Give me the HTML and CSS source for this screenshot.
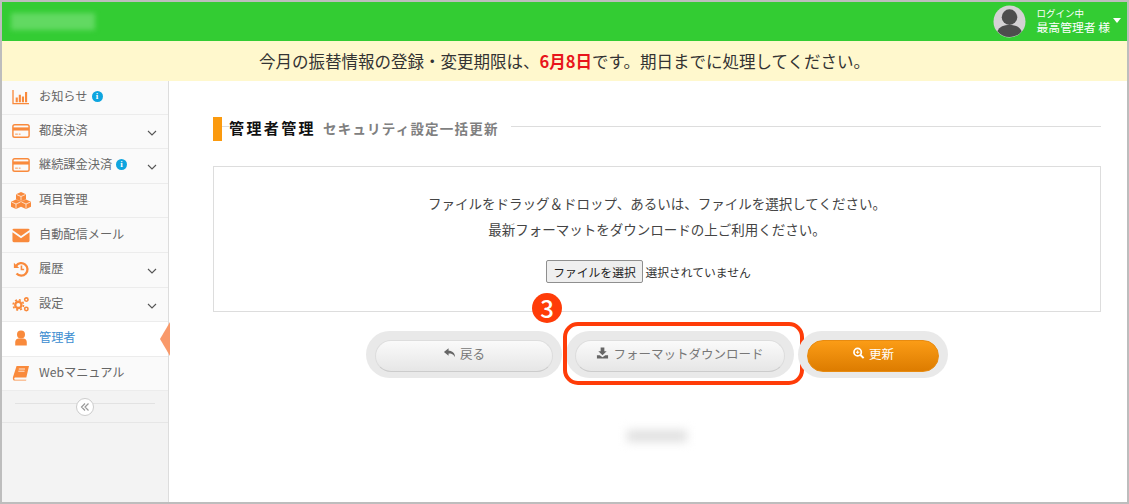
FILE: index.html
```html
<!DOCTYPE html>
<html lang="ja">
<head>
    <meta charset="UTF-8">
    <title>管理者管理</title>
    <link rel="stylesheet" href="styles.css">
</head>
<body>
<div class="frame">
    <header class="topbar">
        <div class="logo-blur"></div>
        <div class="user">
            <svg class="avatar" viewBox="0 0 34 34">
                <circle cx="17" cy="17" r="16.5" fill="#d4d2d4"/>
                <circle cx="17" cy="12.5" r="8" fill="#4d4d4d"/>
                <path d="M4.5 27c2-5 7-6.500 12.500-6.500S27.500 22 29.500 27c-3 4-7.500 6-12.500 6S7.500 31 4.500 27z" fill="#4d4d4d"/>
            </svg>
            <div class="user-text">
                <div class="user-status">ログイン中</div>
                <div class="user-name">最高管理者 様</div>
            </div>
            <span class="user-caret"></span>
        </div>
    </header>
    <div class="notice">今月の振替情報の登録・変更期限は、<b>6月8日</b>です。期日までに処理してください。</div>
    <div class="layout">
        <nav class="sidebar">
            <a class="nav-item">
                <svg class="nav-icon" viewBox="0 0 20 18"><path d="M1 1v15.500h18" fill="none" stroke="#f98a3c" stroke-width="1.500"/><path d="M4 9.500h2.400V15H4zM7.500 6.500h2.400V15H7.500zM11 8.500h2.400V15H11zM14.500 3.500h2.400V15h-2.400z" fill="#f98a3c"/></svg>
                <span>お知らせ</span><i class="info">i</i>
            </a>
            <a class="nav-item">
                <svg class="nav-icon" viewBox="0 0 20 16"><rect x="1" y="1" width="18" height="14" rx="2" fill="none" stroke="#f98a3c" stroke-width="1.600"/><path d="M1 4h18v3.500H1z" fill="#f98a3c"/><path d="M3.500 11.500h3M7.500 11.500h2" stroke="#f98a3c" stroke-width="1"/></svg>
                <span>都度決済</span><svg class="chev" viewBox="0 0 10 6"><path d="M1 1l4 4 4-4" fill="none" stroke="#555" stroke-width="1.100"/></svg>
            </a>
            <a class="nav-item">
                <svg class="nav-icon" viewBox="0 0 20 16"><rect x="1" y="1" width="18" height="14" rx="2" fill="none" stroke="#f98a3c" stroke-width="1.600"/><path d="M1 4h18v3.500H1z" fill="#f98a3c"/><path d="M3.500 11.500h3M7.500 11.500h2" stroke="#f98a3c" stroke-width="1"/></svg>
                <span>継続課金決済</span><i class="info">i</i><svg class="chev" viewBox="0 0 10 6"><path d="M1 1l4 4 4-4" fill="none" stroke="#555" stroke-width="1.100"/></svg>
            </a>
            <a class="nav-item">
                <svg class="nav-icon nav-icon-cubes" viewBox="0 0 20 17"><path d="M10 0l5 2.200v5L10 9.500 5 7.200v-5zM5 7.500l5 2.200v5L5 17 0 14.700v-5zM15 7.500l5 2.200v5L15 17l-5-2.300v-5z" fill="#f98a3c"/><path d="M5.500 2.500L10 4.500l4.500-2M10 4.500v4M.5 10L5 12l4.500-2M5 12v4.500M10.500 10l4.500 2 4.500-2M15 12v4.500" fill="none" stroke="#fff" stroke-width=".7"/></svg>
                <span>項目管理</span>
            </a>
            <a class="nav-item">
                <svg class="nav-icon" viewBox="0 0 20 16"><path d="M2 1h16a1.500 1.500 0 0 1 1.500 1.500L10 9 .5 2.500A1.500 1.500 0 0 1 2 1z" fill="#f98a3c"/><path d="M.5 5L10 11.500 19.500 5v9.500A1.500 1.500 0 0 1 18 16H2a1.500 1.500 0 0 1-1.500-1.500z" fill="#f98a3c"/></svg>
                <span>自動配信メール</span>
            </a>
            <a class="nav-item">
                <svg class="nav-icon" viewBox="0 0 20 18"><path d="M4.500 5.500A7 7 0 1 1 5 14" fill="none" stroke="#f98a3c" stroke-width="2.600"/><path d="M2 2v6h6z" fill="#f98a3c"/><path d="M10.500 5v4.500h3" fill="none" stroke="#f98a3c" stroke-width="1.800"/></svg>
                <span>履歴</span><svg class="chev" viewBox="0 0 10 6"><path d="M1 1l4 4 4-4" fill="none" stroke="#555" stroke-width="1.100"/></svg>
            </a>
            <a class="nav-item">
                <svg class="nav-icon" viewBox="0 0 20 18"><circle cx="7" cy="10" r="3.500" fill="none" stroke="#f98a3c" stroke-width="2.600"/><circle cx="7" cy="10" r="5.800" fill="none" stroke="#f98a3c" stroke-width="1.800" stroke-dasharray="2.300 2.250"/><circle cx="16" cy="4" r="1.900" fill="none" stroke="#f98a3c" stroke-width="1.800"/><circle cx="16" cy="14.500" r="1.900" fill="none" stroke="#f98a3c" stroke-width="1.800"/></svg>
                <span>設定</span><svg class="chev" viewBox="0 0 10 6"><path d="M1 1l4 4 4-4" fill="none" stroke="#555" stroke-width="1.100"/></svg>
            </a>
            <a class="nav-item active">
                <svg class="nav-icon" viewBox="0 0 20 18"><circle cx="10" cy="5" r="4.500" fill="#f98a3c"/><path d="M3.500 17.500v-4c0-3 2.500-4 3.500-4h6c1 0 3.500 1 3.500 4v4z" fill="#f98a3c"/></svg>
                <span>管理者</span>
            </a>
            <a class="nav-item">
                <svg class="nav-icon" viewBox="0 0 20 18"><path d="M5 1h14l-3 13H3.500C2 14 2 16.500 3.500 16.500H16l-.3 1H3C.5 17.500.5 14 1.500 12z" fill="#f98a3c"/><path d="M7.500 4.500h7M7 7h7" stroke="#fff" stroke-width=".9"/></svg>
                <span>Webマニュアル</span>
            </a>
            <div class="collapse-row">
                <span class="collapse-btn"><svg viewBox="0 0 10 10"><path d="M5 1.500L1.500 5 5 8.500M8.500 1.500L5 5l3.500 3.500" fill="none" stroke="#999" stroke-width="1.200"/></svg></span>
            </div>
        </nav>
        <main class="content">
            <div class="page-title">
                <h1>管理者管理</h1>
                <span class="page-sub">セキュリティ設定一括更新</span>
            </div>
            <section class="upload-box">
                <p>ファイルをドラッグ＆ドロップ、あるいは、ファイルを選択してください。</p>
                <p>最新フォーマットをダウンロードの上ご利用ください。</p>
                <div class="file-row">
                    <button class="file-btn">ファイルを選択</button>
                    <span>選択されていません</span>
                </div>
            </section>
            <div class="actions">
                <span class="badge">3</span>
                <div class="pill pill-back">
                    <a class="btn">
                        <svg class="btn-icon" viewBox="0 0 14 12"><path d="M6 1L1 5l5 4V6.500c3 0 5 .5 7 4C13 6 10 3.500 6 3.500z" fill="#666"/></svg>戻る
                    </a>
                </div>
                <div class="pill pill-format">
                    <a class="btn">
                        <svg class="btn-icon" viewBox="0 0 14 12"><path d="M5 0h4v4h2.500L7 8.500 2.500 4H5zM1 8.500h3L7 10.500l3-2h3V12H1z" fill="#666"/></svg>フォーマットダウンロード
                    </a>
                    <div class="highlight"></div>
                </div>
                <div class="pill pill-update">
                    <a class="btn btn-primary">
                        <svg class="btn-icon" viewBox="0 0 14 14"><circle cx="6" cy="6" r="4.300" fill="none" stroke="#fff" stroke-width="2"/><path d="M9 9l4 4" stroke="#fff" stroke-width="2.200"/><path d="M4 6h4M6 4v4" stroke="#fff" stroke-width="1.200"/></svg>更新
                    </a>
                </div>
            </div>
            <div class="footer-blur"></div>
        </main>
    </div>
</div>
</body>
</html>
```

FILE: styles.css
```css
html, body {
    margin: 0;
    padding: 0;
}
body {
    font-family: "Noto Sans CJK JP", "Noto Sans", sans-serif;
    color: #444;
}
.frame {
    width: 1129px;
    height: 504px;
    box-sizing: border-box;
    border: 2px solid #bdbdbd;
    overflow: hidden;
    background: #fff;
}
.topbar {
    height: 39px;
    background: #33cc33;
    display: flex;
    justify-content: space-between;
    align-items: center;
}
.logo-blur {
    width: 84px;
    height: 17px;
    margin-left: 9px;
    background: #62d962;
    filter: blur(2.500px);
}
.user {
    display: flex;
    align-items: center;
    color: #fff;
    margin-right: 6px;
}
.avatar {
    width: 33px;
    height: 33px;
    margin-bottom: 1px;
}
.user-text {
    margin: 0 0 2px 11px;
}
.user-status {
    font-size: 9.500px;
    line-height: 12px;
}
.user-name {
    font-size: 11.800px;
    line-height: 15px;
}
.user-caret {
    margin: 0 0 3px 3px;
    border-left: 4px solid transparent;
    border-right: 4px solid transparent;
    border-top: 5px solid #fff;
}
.notice {
    height: 40px;
    line-height: 40px;
    background: #fff8cd;
    text-align: center;
    font-size: 16.500px;
    color: #333;
}
.notice b {
    color: #e8151b;
}
.layout {
    display: flex;
    height: 421px;
}
.sidebar {
    width: 166px;
    flex-shrink: 0;
    background: #f3f3f3;
    border-right: 1px solid #ddd;
}
.nav-item {
    position: relative;
    height: 33.600px;
    display: flex;
    align-items: center;
    padding-left: 10px;
    background: #fafafa;
    border-bottom: 1px solid #ececec;
    font-size: 12.200px;
    color: #666;
}
.nav-item:first-child {
    height: 32.600px;
}
.nav-item span {
    margin-bottom: 3px;
}
.nav-icon {
    width: 18px;
    height: 16px;
    margin: 0 9px 1px 0;
    flex-shrink: 0;
}
.nav-icon-cubes {
    width: 20px;
    height: 17px;
    margin: 0 8px 0 -1px;
}
.info {
    width: 11px;
    height: 11px;
    margin: 0 0 2px 4px;
    border-radius: 50%;
    background: #0ea5df;
    color: #fff;
    font: bold 9px/11px "Liberation Serif", serif;
    text-align: center;
}
.chev {
    position: absolute;
    right: 11px;
    top: 15px;
    width: 10px;
    height: 6px;
}
.nav-item.active {
    background: #fff;
    color: #3c8dd0;
}
.nav-item.active::after {
    content: "";
    position: absolute;
    right: -2px;
    top: 0;
    bottom: 0;
    border-top: 17px solid transparent;
    border-bottom: 17px solid transparent;
    border-right: 10px solid #f9996a;
}
.collapse-row {
    height: 31px;
    padding: 0 13px;
    display: flex;
    justify-content: center;
    align-items: center;
    border-bottom: 1px solid #e6e6e6;
    background: linear-gradient(#e2e2e2, #e2e2e2) center 12px / 140px 1px no-repeat;
}
.collapse-btn {
    display: flex;
    justify-content: center;
    align-items: center;
    width: 16px;
    height: 16px;
    margin-left: -1px;
    border: 1px solid #ccc;
    border-radius: 50%;
    background: #fff;
}
.collapse-btn svg {
    width: 10px;
    height: 10px;
}
.content {
    flex: 1;
    padding: 36px 26px 0 44px;
    position: relative;
}
.page-title {
    display: flex;
    align-items: center;
    height: 24px;
    border-left: 9px solid #fb9a0e;
    padding-left: 7px;
    background: linear-gradient(#ddd, #ddd) 0 9px / 100% 1px no-repeat;
}
.page-title h1 {
    margin: 0 0 3px;
    padding: 0;
    font-size: 15px;
    letter-spacing: 2.400px;
    color: #111;
    background: #fff;
}
.page-sub {
    margin-bottom: 3px;
    padding: 0 12px 0 7px;
    font-size: 13.500px;
    font-weight: 700;
    letter-spacing: 1.200px;
    color: #808080;
    background: #fff;
}
.upload-box {
    margin-top: 25px;
    height: 146px;
    box-sizing: border-box;
    border: 1px solid #ddd;
    padding-top: 26px;
    text-align: center;
    font-size: 13.500px;
    color: #444;
}
.upload-box p {
    margin: 0 0 6px;
    line-height: 20px;
}
.file-row {
    margin: 21px 17px 0 0;
    font-size: 11.800px;
    color: #333;
}
.file-btn {
    height: 23px;
    padding: 0 6px;
    border: 1px solid #8f8f8f;
    border-radius: 2px;
    background: #efefef;
    color: #222;
    font: 11.800px "Noto Sans CJK JP", sans-serif;
}
.actions {
    position: relative;
    margin-top: 19px;
    display: flex;
    justify-content: center;
    gap: 4px;
}
.pill {
    position: relative;
    height: 47px;
    box-sizing: border-box;
    padding: 8.500px 9px;
    border-radius: 24px;
    background: #e9e9e9;
}
.pill-back { width: 196px; }
.pill-format { width: 228px; }
.pill-update { width: 150px; }
.btn {
    display: flex;
    justify-content: center;
    align-items: center;
    height: 25px;
    padding-bottom: 5px;
    border: 1px solid #ddd;
    border-bottom-color: #ccc;
    border-radius: 16px;
    background: linear-gradient(#fafafa, #e6e6e6);
    font-size: 12.500px;
    color: #777;
}
.btn-icon {
    width: 13px;
    height: 12px;
    margin-right: 4px;
}
.btn-primary {
    border-color: #e88b10;
    background: linear-gradient(#fb9c16, #dd7c00);
    color: #fff;
}
.highlight {
    position: absolute;
    left: -3px;
    right: -10px;
    top: -9px;
    bottom: -7px;
    border: 4px solid #ff3c08;
    border-radius: 15px;
}
.badge {
    position: absolute;
    left: 319px;
    top: -38px;
    z-index: 1;
    width: 30px;
    height: 30px;
    border-radius: 50%;
    background: #ff3c08;
    color: #fff;
    font-size: 24px;
    font-weight: 500;
    line-height: 30px;
    text-align: center;
}
.footer-blur {
    width: 60px;
    height: 12px;
    margin: 52px 0 0 414px;
    background: #e0e0e0;
    filter: blur(5px);
}
```
